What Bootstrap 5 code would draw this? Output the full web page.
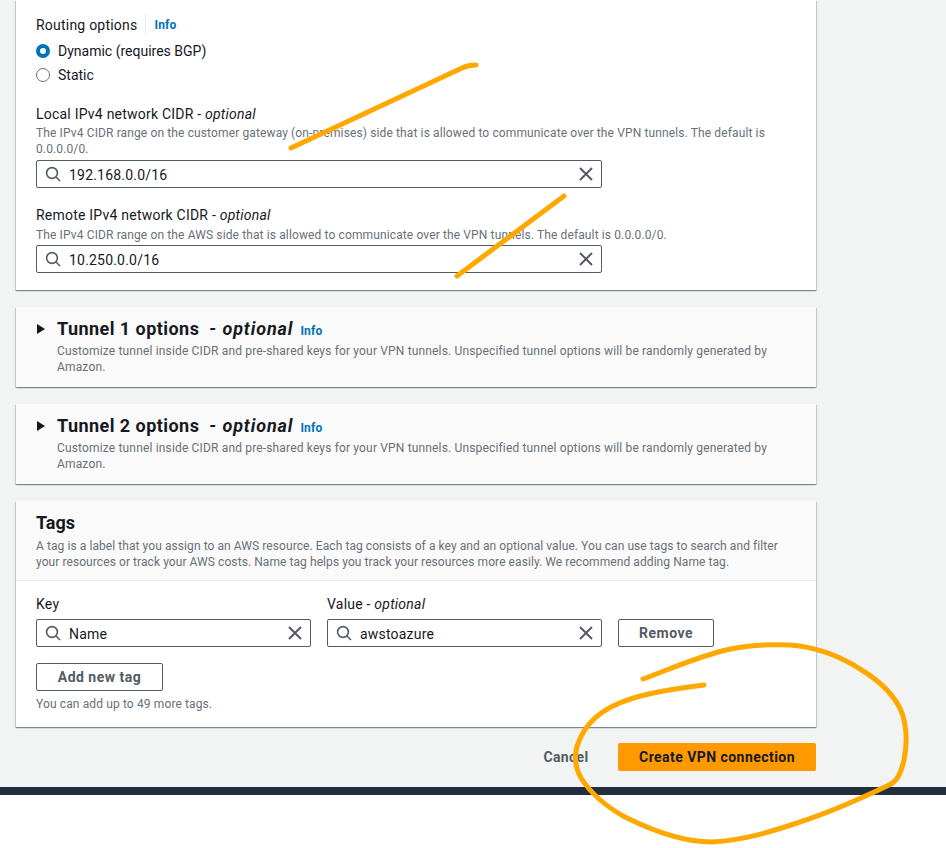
<!DOCTYPE html>
<html lang="en">
<head>
    <meta charset="UTF-8">
    <title>Create VPN connection</title>
    <link href="https://cdn.jsdelivr.net/npm/bootstrap@5.3.0/dist/css/bootstrap.min.css" rel="stylesheet">
    <style>
        html, body { height: 100%; }
        body { background: #fff; color: #16191f; font-family: Roboto, "Liberation Sans", sans-serif; font-size: 14px; line-height: 20px; position: relative; }
        .page-area { background: #f2f3f3; height: 787px; padding: 0 130px 0 16px; overflow: hidden; }
        .page-end { background: #232f3e; height: 8px; }
        .aws-panel { background: #fff; border: 0; border-radius: 0; box-shadow: 0 1px 1px 0 rgba(0,28,36,.3), 1px 1px 1px 0 rgba(0,28,36,.15), -1px 1px 1px 0 rgba(0,28,36,.15); margin-bottom: 17px; }
        .routing-panel { height: 290px; padding: 14px 20px 0; }
        .fold-panel { background: #fafafa; height: 80px; padding: 10px 20px 0; }
        .tags-panel { height: 226px; margin-bottom: 16px; }
        .tags-head { background: #fafafa; height: 80px; padding: 11px 20px 0; border-bottom: 1px solid #eaeded; }
        .tags-body { padding: 13px 20px 0; }
        .info-link { color: #0073bb; font-size: 12px; font-weight: 700; text-decoration: none; letter-spacing: .2px; }
        .info-sep { border-left: 1px solid #eaeded; margin-left: 8px; padding-left: 8px; line-height: 20px; }
        .fold-info { margin-left: 7px; margin-top: 4px; }
        .hint-text { color: #687078; font-size: 12px; line-height: 16px; letter-spacing: .125px; }
        .tags-hint { margin-top: 4px; letter-spacing: .075px; }
        .more-hint { margin-top: 5px; }
        .field-label { line-height: 20px; letter-spacing: .22px; }
        .field-label + .hint-text { margin-top: 1px; }
        .field-label + .remote-hint { margin-top: 2px; }
        .local-label { margin-top: 17px; }
        .remote-label { margin-top: 17px; }
        .aws-radio { gap: 8px; height: 24px; }
        .aws-radio .form-check-input { width: 14px; height: 14px; margin: 0; border: 1px solid #687078; flex: none; }
        .aws-radio .form-check-input:checked { background-color: #fff; background-image: none; border: 4px solid #0073bb; }
        .aws-field { border: 1px solid #545b64; border-radius: 2px; height: 28px; padding: 0 7px 0 8px; gap: 8px; background: #fff; }
        .aws-field input { border: 0; outline: 0; padding: 1px 0 0; min-width: 0; flex: 1; font: inherit; letter-spacing: .2px; color: #16191f; background: transparent; }
        .aws-field svg { flex: none; }
        .wide-field { width: 566px; margin-top: 3px; }
        .remote-hint + .wide-field { margin-top: 2px; }
        .half-field { width: 275px; }
        .key-label { margin-bottom: 5px; }
        .aws-btn { border: 1px solid #545b64; border-radius: 2px; background: #fff; color: #545b64; font-size: 14px; font-weight: 700; letter-spacing: .5px; height: 28px; padding: 0; line-height: 26px; }
        .aws-btn:hover { background: #fafafa; color: #16191f; border-color: #16191f; }
        .remove-btn { width: 96px; }
        .add-btn { width: 127px; }
        .cancel-btn { border: 0; background: transparent; width: 72px; height: 28px; line-height: 28px; letter-spacing: .3px; }
        .create-btn { border: 0; background: #f90; color: #16191f; width: 198px; line-height: 28px; letter-spacing: .45px; }
        .create-btn:hover { background: #ec7211; color: #16191f; }
        .fold-title { font-size: 18px; font-weight: 700; line-height: 22px; margin: 0; letter-spacing: .45px; }
        .fold-title em { margin-left: 5px; letter-spacing: .9px; }
        .tags-title { letter-spacing: 0; }
        .fold-text { padding-left: 21px; margin-top: 2px; letter-spacing: .16px; }
        .fold-arrow { width: 0; height: 0; border-left: 8px solid #16191f; border-top: 5px solid transparent; border-bottom: 5px solid transparent; margin-right: 12px; margin-left: 1px; }
        .ink-layer { position: absolute; left: 0; top: 0; pointer-events: none; }
    </style>
</head>
<body>

<div class="page-area">
    <div class="card aws-panel routing-panel">
        <div class="d-flex align-items-center">
            <span class="field-label">Routing options</span>
            <span class="info-sep"><a href="#" class="info-link">Info</a></span>
        </div>
        <div class="d-flex align-items-center aws-radio mt-1">
            <input class="form-check-input" type="radio" name="routing" id="routeDynamic" checked>
            <label for="routeDynamic">Dynamic (requires BGP)</label>
        </div>
        <div class="d-flex align-items-center aws-radio">
            <input class="form-check-input" type="radio" name="routing" id="routeStatic">
            <label for="routeStatic">Static</label>
        </div>

        <div class="field-label local-label">Local IPv4 network CIDR - <em>optional</em></div>
        <div class="hint-text">The IPv4 CIDR range on the customer gateway (on-premises) side that is allowed to communicate over the VPN tunnels. The default is 0.0.0.0/0.</div>
        <div class="d-flex align-items-center aws-field wide-field">
            <svg width="16" height="16" viewBox="0 0 16 16" fill="none" stroke="#545b64" stroke-width="1.6"><circle cx="7" cy="7" r="5.4"/><path d="M11 11l4 4"/></svg>
            <input type="text" value="192.168.0.0/16">
            <svg width="16" height="16" viewBox="0 0 16 16" fill="none" stroke="#545b64" stroke-width="2"><path d="M2 2l12 12M14 2L2 14"/></svg>
        </div>

        <div class="field-label remote-label">Remote IPv4 network CIDR - <em>optional</em></div>
        <div class="hint-text remote-hint">The IPv4 CIDR range on the AWS side that is allowed to communicate over the VPN tunnels. The default is 0.0.0.0/0.</div>
        <div class="d-flex align-items-center aws-field wide-field">
            <svg width="16" height="16" viewBox="0 0 16 16" fill="none" stroke="#545b64" stroke-width="1.6"><circle cx="7" cy="7" r="5.4"/><path d="M11 11l4 4"/></svg>
            <input type="text" value="10.250.0.0/16">
            <svg width="16" height="16" viewBox="0 0 16 16" fill="none" stroke="#545b64" stroke-width="2"><path d="M2 2l12 12M14 2L2 14"/></svg>
        </div>
    </div>

    <div class="card aws-panel fold-panel">
        <div class="d-flex align-items-center">
            <span class="fold-arrow"></span>
            <h2 class="fold-title">Tunnel 1 options <em>- optional</em></h2>
            <a href="#" class="info-link fold-info">Info</a>
        </div>
        <div class="hint-text fold-text">Customize tunnel inside CIDR and pre-shared keys for your VPN tunnels. Unspecified tunnel options will be randomly generated by Amazon.</div>
    </div>

    <div class="card aws-panel fold-panel">
        <div class="d-flex align-items-center">
            <span class="fold-arrow"></span>
            <h2 class="fold-title">Tunnel 2 options <em>- optional</em></h2>
            <a href="#" class="info-link fold-info">Info</a>
        </div>
        <div class="hint-text fold-text">Customize tunnel inside CIDR and pre-shared keys for your VPN tunnels. Unspecified tunnel options will be randomly generated by Amazon.</div>
    </div>

    <div class="card aws-panel tags-panel">
        <div class="tags-head">
            <h2 class="fold-title tags-title">Tags</h2>
            <div class="hint-text tags-hint">A tag is a label that you assign to an AWS resource. Each tag consists of a key and an optional value. You can use tags to search and filter your resources or track your AWS costs. Name tag helps you track your resources more easily. We recommend adding Name tag.</div>
        </div>
        <div class="tags-body">
            <div class="d-flex align-items-end gap-3">
                <div class="half-field">
                    <div class="field-label key-label">Key</div>
                    <div class="d-flex align-items-center aws-field">
                        <svg width="16" height="16" viewBox="0 0 16 16" fill="none" stroke="#545b64" stroke-width="1.6"><circle cx="7" cy="7" r="5.4"/><path d="M11 11l4 4"/></svg>
                        <input type="text" value="Name">
                        <svg width="16" height="16" viewBox="0 0 16 16" fill="none" stroke="#545b64" stroke-width="2"><path d="M2 2l12 12M14 2L2 14"/></svg>
                    </div>
                </div>
                <div class="half-field">
                    <div class="field-label key-label">Value - <em>optional</em></div>
                    <div class="d-flex align-items-center aws-field">
                        <svg width="16" height="16" viewBox="0 0 16 16" fill="none" stroke="#545b64" stroke-width="1.6"><circle cx="7" cy="7" r="5.4"/><path d="M11 11l4 4"/></svg>
                        <input type="text" value="awstoazure">
                        <svg width="16" height="16" viewBox="0 0 16 16" fill="none" stroke="#545b64" stroke-width="2"><path d="M2 2l12 12M14 2L2 14"/></svg>
                    </div>
                </div>
                <button type="button" class="btn aws-btn remove-btn">Remove</button>
            </div>
            <button type="button" class="btn aws-btn add-btn d-block mt-3">Add new tag</button>
            <div class="hint-text more-hint">You can add up to 49 more tags.</div>
        </div>
    </div>

    <div class="d-flex justify-content-end align-items-center gap-3">
        <button type="button" class="btn aws-btn cancel-btn">Cancel</button>
        <button type="button" class="btn aws-btn create-btn">Create VPN connection</button>
    </div>
</div>
<div class="page-end"></div>

<svg class="ink-layer" width="946" height="848" viewBox="0 0 946 848" fill="none" stroke="#ffa900" stroke-width="5" stroke-linecap="round" stroke-linejoin="round">
    <path d="M291 148L462 68Q468 65 476 65"/>
    <path d="M564 196L457 276"/>
    <path d="M643 679C670 669 695 658 722 651C745 645 770 644 790 645C815 647 840 656 860 669C880 681 895 695 902 713C907 728 907 745 904 760C901 772 898 781 889 785C860 799 825 814 797 823C770 832 745 840 712 842C685 842 655 832 625 817C605 806 590 792 581 778C574 766 574 752 579 741C585 726 595 715 613 706C635 695 665 690 704 685"/>
</svg>

</body>
</html>
